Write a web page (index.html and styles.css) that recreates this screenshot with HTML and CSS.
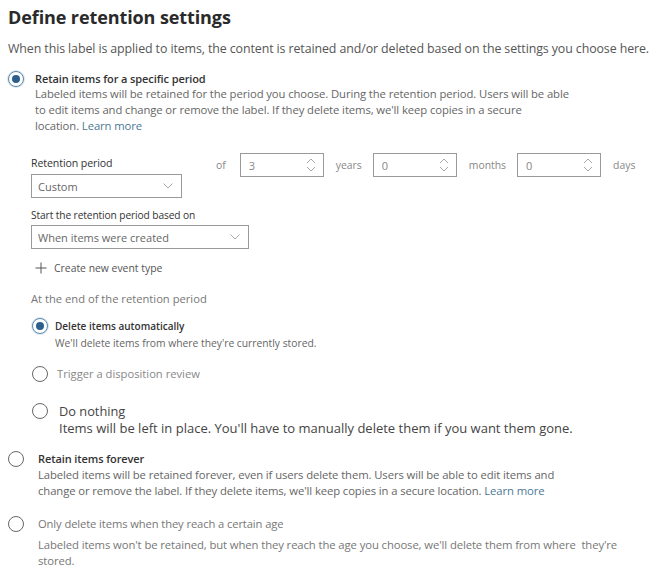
FILE: index.html
```html
<!DOCTYPE html>
<html>
<head>
<meta charset="utf-8">
<link rel="stylesheet" href="styles.css">
</head>
<body>
<h1 class="title">Define retention settings</h1>
<p class="intro">When this label is applied to items, the content is retained and/or deleted based on the settings you choose here.</p>

<div class="option opt-first">
  <span class="radio checked"></span>
  <div class="opt-body">
    <div class="opt-label">Retain items for a specific period</div>
    <div class="opt-desc">Labeled items will be retained for the period you choose. During the retention period. Users will be able<br>to edit items and change or remove the label. If they delete items, we'll keep copies in a secure<br>location. <span class="link">Learn more</span></div>
  </div>
</div>

<div class="period">
  <div class="period-row">
    <div class="period-left">
      <div class="field-label">Retention period</div>
      <div class="select select-small"><span>Custom</span><svg class="chev" width="10" height="6" viewBox="0 0 10 6"><path d="M0.5 0.5 L5 5 L9.5 0.5" fill="none" stroke="#aaa" stroke-width="1"/></svg></div>
    </div>
    <div class="spins">
      <span class="unit unit-of">of</span>
      <div class="spin"><span>3</span><svg class="arrows" width="10" height="16" viewBox="0 0 10 16"><path d="M1 6 L5 2 L9 6 M1 10 L5 14 L9 10" fill="none" stroke="#aaa" stroke-width="1"/></svg></div>
      <span class="unit">years</span>
      <div class="spin"><span>0</span><svg class="arrows" width="10" height="16" viewBox="0 0 10 16"><path d="M1 6 L5 2 L9 6 M1 10 L5 14 L9 10" fill="none" stroke="#aaa" stroke-width="1"/></svg></div>
      <span class="unit">months</span>
      <div class="spin"><span>0</span><svg class="arrows" width="10" height="16" viewBox="0 0 10 16"><path d="M1 6 L5 2 L9 6 M1 10 L5 14 L9 10" fill="none" stroke="#aaa" stroke-width="1"/></svg></div>
      <span class="unit">days</span>
    </div>
  </div>
  <div class="field-label field-start">Start the retention period based on</div>
  <div class="select select-wide"><span>When items were created</span><svg class="chev" width="10" height="6" viewBox="0 0 10 6"><path d="M0.5 0.5 L5 5 L9.5 0.5" fill="none" stroke="#aaa" stroke-width="1"/></svg></div>
  <div class="create"><svg width="12" height="12" viewBox="0 0 12 12"><path d="M6 0.5 V11.5 M0.5 6 H11.5" stroke="#555" stroke-width="1" fill="none"/></svg><span>Create new event type</span></div>

  <div class="end-label">At the end of the retention period</div>

  <div class="sub-option sub-delete">
    <span class="radio checked"></span>
    <div class="opt-body">
      <div class="sub-label">Delete items automatically</div>
      <div class="sub-desc">We'll delete items from where they're currently stored.</div>
    </div>
  </div>
  <div class="sub-option sub-trigger">
    <span class="radio"></span>
    <div class="opt-body">
      <div class="trigger-label">Trigger a disposition review</div>
    </div>
  </div>
  <div class="sub-option sub-nothing">
    <span class="radio"></span>
    <div class="opt-body">
      <div class="nothing-label">Do nothing</div>
      <div class="nothing-desc">Items will be left in place. You'll have to manually delete them if you want them gone.</div>
    </div>
  </div>
</div>

<div class="option opt-forever">
  <span class="radio"></span>
  <div class="opt-body">
    <div class="opt-label">Retain items forever</div>
    <div class="opt-desc">Labeled items will be retained forever, even if users delete them. Users will be able to edit items and<br>change or remove the label. If they delete items, we'll keep copies in a secure location. <span class="link">Learn more</span></div>
  </div>
</div>

<div class="option opt-age">
  <span class="radio"></span>
  <div class="opt-body">
    <div class="opt-label light">Only delete items when they reach a certain age</div>
    <div class="opt-desc age-desc">Labeled items won't be retained, but when they reach the age you choose, we'll delete them from where &nbsp;they're<br>stored.</div>
  </div>
</div>
</body>
</html>
```

FILE: styles.css
```css
* { box-sizing: border-box; }
html, body { background: #fff; }
body {
  margin: 0;
  padding: 0 8px;
  font-family: "Open Sans", "Noto Sans", sans-serif;
  color: #333;
}
.title {
  margin: 4px 0 0 0;
  font-size: 18px;
  font-weight: 700;
  color: #2a2a2a;
  line-height: 26px;
  letter-spacing: -0.1px;
}
.intro {
  margin: 11px 0 0 0;
  font-size: 12.4px;
  line-height: 16px;
  color: #555;
  letter-spacing: -0.1px;
  white-space: nowrap;
}
.option {
  display: flex;
  align-items: flex-start;
}
.opt-first { margin-top: 14px; }
.radio {
  flex: none;
  width: 16px;
  height: 16px;
  border: 1px solid #666;
  border-radius: 50%;
  display: flex;
  align-items: center;
  justify-content: center;
  background: #fff;
}
.radio.checked {
  border-color: #5b88ad;
  box-shadow: 0 0 0 1px #dbe7f0;
}
.radio.checked::after {
  content: "";
  width: 8px;
  height: 8px;
  border-radius: 50%;
  background: #2d5f8c;
}
.opt-body { margin-left: 11px; }
.option .radio { margin-top: 0; }
.opt-label {
  font-size: 11px;
  line-height: 15px;
  font-weight: 600;
  color: #333;
  letter-spacing: -0.1px;
}
.opt-label.light { font-weight: 400; color: #777; }
.opt-desc {
  font-size: 11.3px;
  line-height: 16px;
  color: #666;
  letter-spacing: -0.1px;
  white-space: nowrap;
}
.link { color: #4d7896; }
.period { padding-left: 23px; margin-top: 19px; }
.period-row { display: flex; align-items: flex-start; }
.period-left { width: 185px; }
.field-label {
  font-size: 10.6px;
  line-height: 16px;
  color: #333;
  letter-spacing: -0.1px;
  margin-top: 2px;
}
.select {
  display: flex;
  align-items: center;
  justify-content: space-between;
  height: 24px;
  border: 1px solid #9a9a9a;
  padding: 0 8px 0 6px;
  font-size: 11px;
  color: #666;
  background: #fff;
}
.select-small { width: 151px; margin-top: 3px; }
.select-wide { width: 218px; margin-top: 2px; }
.chev { flex: none; }
.spins { display: flex; align-items: center; }
.unit {
  font-size: 10.4px;
  color: #888;
  margin: 0 11px 0 12px;
}
.unit-of { margin: 0 14px 0 0; }
.spins .unit:last-child { margin-right: 0; }
.spin {
  width: 84px;
  height: 24px;
  border: 1px solid #9a9a9a;
  display: flex;
  align-items: center;
  justify-content: space-between;
  padding: 0 7px 0 8px;
  font-size: 11px;
  color: #888;
}
.field-start { margin-top: 9px; font-size: 10.2px; }
.create {
  display: flex;
  align-items: center;
  margin-top: 12px;
  padding-left: 4px;
  font-size: 10.4px;
  color: #555;
}
.create svg { margin-right: 7px; }
.end-label {
  margin-top: 16px;
  font-size: 11.2px;
  color: #777;
  line-height: 16px;
}
.sub-option { display: flex; align-items: flex-start; }
.sub-option .radio { margin-left: 1px; }
.sub-delete { margin-top: 11px; }
.sub-delete .opt-body { margin-left: 7px; }
.sub-label {
  font-size: 10px;
  font-weight: 600;
  line-height: 16px;
  color: #333;
}
.sub-desc {
  margin-top: 1px;
  font-size: 10.3px;
  line-height: 16px;
  color: #666;
}
.sub-trigger { margin-top: 15px; }
.sub-trigger .opt-body { margin-left: 9px; }
.trigger-label { font-size: 11.2px; color: #888; line-height: 16px; }
.sub-nothing { margin-top: 21px; }
.sub-nothing .opt-body { margin-left: 11px; }
.nothing-label { font-size: 12.8px; color: #444; line-height: 16px; }
.nothing-desc { margin-top: 0; font-size: 13px; color: #444; line-height: 18px; white-space: nowrap; }
.opt-forever { margin-top: 14px; }
.opt-forever .opt-body, .opt-age .opt-body { margin-left: 14px; }
.opt-forever .opt-label { font-weight: 600; }
.opt-forever .opt-desc { margin-top: 1px; }
.opt-age { margin-top: 17px; }
.opt-age .opt-label { font-size: 11.2px; }
.age-desc { margin-top: 6px; color: #777; }
```
